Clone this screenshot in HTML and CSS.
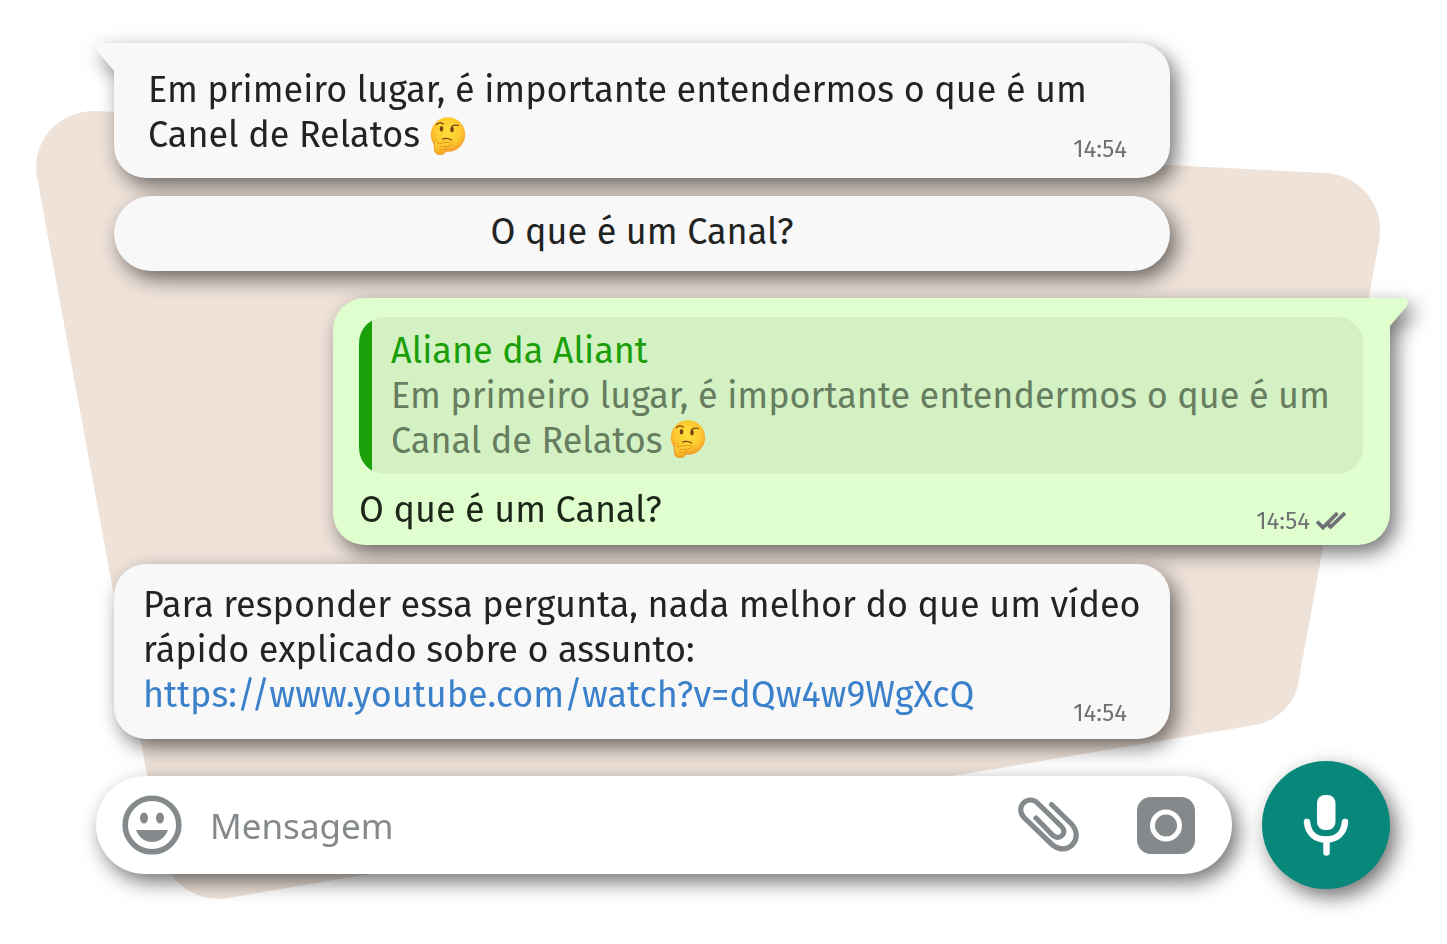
FILE: index.html
```html
<!DOCTYPE html>
<html lang="pt-BR">
<head>
<meta charset="utf-8">
<meta name="viewport" content="width=device-width, initial-scale=1">
<title>Canal de Relatos</title>
<link rel="stylesheet" href="styles.css">
</head>
<body>
<svg class="backdrop" viewBox="0 0 1447 944" preserveAspectRatio="none" aria-hidden="true">
  <path d="M37 177C31 142 58 110 96 111L1325 173C1361 175 1386 207 1379 242L1298 684C1294 706 1276 721 1255 725L228 898C195 903 166 882 160 846Z"/>
</svg>
<svg class="defs" aria-hidden="true">
  <defs>
    <radialGradient id="face" cx=".5" cy=".4" r=".6">
      <stop offset="0" stop-color="#ffdf3c"/><stop offset=".65" stop-color="#fdc92e"/><stop offset="1" stop-color="#f39a2b"/>
    </radialGradient>
    <linearGradient id="hand" x1="0" y1="0" x2="0" y2="1">
      <stop offset="0" stop-color="#ffdc3e"/><stop offset="1" stop-color="#f5a81f"/>
    </linearGradient>
    <symbol id="thinking" viewBox="0 0 36 38">
      <circle cx="18" cy="17.500" r="17.200" fill="url(#face)"/>
      <path d="M6.500 7.500Q9.500 4.500 13.500 7M21.500 9.500Q25 7.500 28.500 8.500" fill="none" stroke="#7a4315" stroke-width="1.300" stroke-linecap="round"/>
      <ellipse cx="11.500" cy="11.800" rx="1.800" ry="2.700" fill="#74431a"/>
      <ellipse cx="22" cy="12.500" rx="1.800" ry="2.700" fill="#74431a"/>
      <path d="M12.500 22Q17 20.500 21.500 23" fill="none" stroke="#7a4315" stroke-width="1.200" stroke-linecap="round"/>
      <path d="M4.500 24.500C5 22 7.500 22.500 7.300 25L7.500 27Q14 25 20.500 25.500C23 26 22 28.500 19.500 28.500L15.500 29.500Q17 32 15.500 35Q14 37.800 10 37.500Q5 37.500 4.500 33Q3.800 28 4.500 24.500Z" fill="url(#hand)" stroke="#e58d1c" stroke-width=".8"/>
      <path d="M9.500 30Q12 28.500 15.500 29.500M10 32.500H15.500" fill="none" stroke="#e58d1c" stroke-width=".7"/>
    </symbol>
  </defs>
</svg>
<main class="chat">
  <article class="bubble received intro">
    <svg class="tail" viewBox="0 0 19 28" aria-hidden="true"><path d="M19 0H5C0 0-2 5 2 9L18 28H19Z"/></svg>
    <p class="text">Em primeiro lugar, é importante entendermos o que é um<br>Canel de Relatos <svg class="emoji" role="img" aria-label="Pensativo"><use href="#thinking"/></svg></p>
    <time class="time">14:54</time>
  </article>
  <button class="option" type="button">O que é um Canal?</button>
  <article class="bubble sent">
    <svg class="tail" viewBox="0 0 19 28" aria-hidden="true"><path d="M0 0H14C19 0 20 5 17 9L1 28H0Z"/></svg>
    <blockquote class="quote">
      <p class="author">Aliane da Aliant</p>
      <p>Em primeiro lugar, é importante entendermos o que é um<br>Canal de Relatos<svg class="emoji" role="img" aria-label="Pensativo"><use href="#thinking"/></svg></p>
    </blockquote>
    <div class="reply">
      <p>O que é um Canal?</p>
      <div class="status">
        <time class="time">14:54</time>
        <svg class="checks" viewBox="0 0 32 20" role="img" aria-label="Entregue"><path d="M2 10.500L8 16.500L22.500 2M14.500 17L30 2M12.500 12.500L16 16.500" fill="none" stroke="#6f7174" stroke-width="3.800"/></svg>
      </div>
    </div>
  </article>
  <article class="bubble received answer">
    <p class="text">Para responder essa pergunta, nada melhor do que um vídeo<br>rápido explicado sobre o assunto:<br><a href="https://www.youtube.com/watch?v=dQw4w9WgXcQ">https://www.youtube.com/watch?v=dQw4w9WgXcQ</a></p>
    <time class="time">14:54</time>
  </article>
  <form class="composer">
    <div class="field">
      <button class="icon" type="button" aria-label="Emojis">
        <svg width="60" height="60" viewBox="0 0 60 60"><circle cx="30" cy="30" r="26.800" fill="none" stroke="#84898c" stroke-width="5.600"/><ellipse cx="22" cy="23" rx="4" ry="5.500"/><ellipse cx="38" cy="23" rx="4" ry="5.500"/><path d="M14 35H46C43 43 37 47 30 47S17 43 14 35Z"/></svg>
      </button>
      <input class="input" type="text" placeholder="Mensagem" aria-label="Mensagem">
      <button class="icon" type="button" aria-label="Anexar">
        <svg width="62" height="56" viewBox="0 0 62 56"><path d="M33.500 7.500L53 26.500C59 32.500 60 41 55 47C49 54 40 53 33.500 47L6 20.500C2 16 1.500 10 5.500 6C9.500 2 15.500 2 19.500 6L43.500 29.500C46.500 32.500 46.500 36 44 38.500C41.500 41 38 41 35 38.500L18 21" fill="none" stroke="#84898c" stroke-width="5.200" stroke-linecap="round"/></svg>
      </button>
      <button class="icon camera" type="button" aria-label="Câmera">
        <svg width="58" height="57" viewBox="0 0 58 57"><rect width="58" height="57" rx="14"/><circle cx="29" cy="28.500" r="13.500" fill="none" stroke="#fff" stroke-width="5"/></svg>
      </button>
    </div>
    <button class="mic" type="button" aria-label="Gravar áudio">
      <svg width="46" height="62" viewBox="0 0 46 62" fill="none" stroke="#fff" stroke-width="6.500" stroke-linecap="round"><rect x="14" y="1" width="18.500" height="35" rx="8" fill="#fff" stroke="none"/><path d="M4 28C5 39 12 45.500 23 45.500S41 39 42 28M23.500 46V58.500"/></svg>
    </button>
  </form>
</main>
</body>
</html>
```
FILE: styles.css
```css
* {
  box-sizing: border-box;
}

body {
  margin: 0;
  position: relative;
  background: #fff;
  color: #222423;
  font-family: "Fira Sans", "Noto Sans", sans-serif;
  font-size: 36px;
  font-variant-numeric: lining-nums;
  line-height: 45px;
}

p,
blockquote {
  margin: 0;
}

button,
input {
  border: 0;
  padding: 0;
  font: inherit;
  color: inherit;
  background: none;
}

svg {
  display: block;
}

.backdrop {
  position: absolute;
  inset: 0;
  width: 100%;
  height: 100%;
  fill: #eee2d9;
}

.defs {
  position: absolute;
  width: 0;
  height: 0;
}

.chat {
  position: relative;
  display: flex;
  flex-direction: column;
  padding: 43px 57px 55px 96px;
}

.bubble {
  position: relative;
  border-radius: 32px;
  filter: drop-shadow(6px 8px 10px rgba(0, 0, 0, .55));
}

.received {
  display: grid;
  margin: 0 220px 0 18px;
  background: #f8f8f8;
}

.received > .text,
.received > .time {
  grid-area: 1 / 1;
}

.received > .time {
  place-self: end;
}

.intro {
  padding: 25px 43px 20px 34px;
  border-top-left-radius: 0;
}

.intro > .time {
  margin-bottom: -6px;
}

.answer {
  margin-top: 19px;
  padding: 19px 24px 21px 29px;
}

.answer > .time {
  margin: 0 19px -10px 0;
}

.tail {
  position: absolute;
  top: 0;
  width: 19px;
  height: 28px;
}

.received .tail {
  left: -18px;
  fill: #f8f8f8;
}

.sent .tail {
  right: -18px;
  fill: #e0ffcf;
}

.time {
  color: #6f7173;
  font-size: 24px;
  line-height: 30px;
}

.emoji {
  display: inline-block;
  width: 36px;
  height: 38px;
  vertical-align: -8px;
}

.option {
  position: relative;
  margin: 18px 220px 0 18px;
  padding: 14px 0 16px;
  border-radius: 38px;
  background: #f8f8f8;
  box-shadow: 6px 8px 20px rgba(0, 0, 0, .55);
}

.sent {
  margin: 27px 0 0 237px;
  padding: 19px 27px 12px 26px;
  border-top-right-radius: 0;
  background: #e0ffcf;
}

.quote {
  padding: 12px 32px 10px;
  border-radius: 26px;
  background: linear-gradient(to right, #1b9f08 13px, #d4f1c4 13px);
  color: #667d60;
}

.quote .emoji {
  margin-left: 7px;
  vertical-align: -5px;
}

.author {
  color: #1b9f08;
}

.reply {
  display: flex;
  justify-content: space-between;
  align-items: flex-end;
  margin-top: 14px;
  color: #1c2719;
}

.status {
  display: flex;
  align-items: center;
  gap: 5px;
  padding-right: 16px;
  margin-bottom: -3px;
}

.checks {
  width: 32px;
  height: 20px;
}

.answer a {
  color: #3b80cb;
  text-decoration: none;
}

.composer {
  position: relative;
  display: flex;
  align-items: center;
  gap: 30px;
  margin-top: 22px;
}

.field {
  display: flex;
  flex: 1;
  align-items: center;
  min-width: 0;
  height: 98px;
  padding: 0 37px 0 26px;
  border-radius: 49px;
  background: #fff;
  box-shadow: 6px 8px 20px rgba(0, 0, 0, .55);
}

.icon {
  flex: none;
  fill: #84898c;
}

.camera {
  margin-left: 57px;
}

.input {
  flex: 1;
  min-width: 0;
  margin: 0 24px 0 28px;
  font-family: "Noto Sans", sans-serif;
  font-size: 35px;
  outline: 0;
}

.input::placeholder {
  color: #84898c;
  opacity: 1;
}

.mic {
  display: grid;
  flex: none;
  place-items: center;
  width: 128px;
  height: 128px;
  border-radius: 50%;
  background: #08877b;
  box-shadow: 6px 8px 20px rgba(0, 0, 0, .55);
}
```
